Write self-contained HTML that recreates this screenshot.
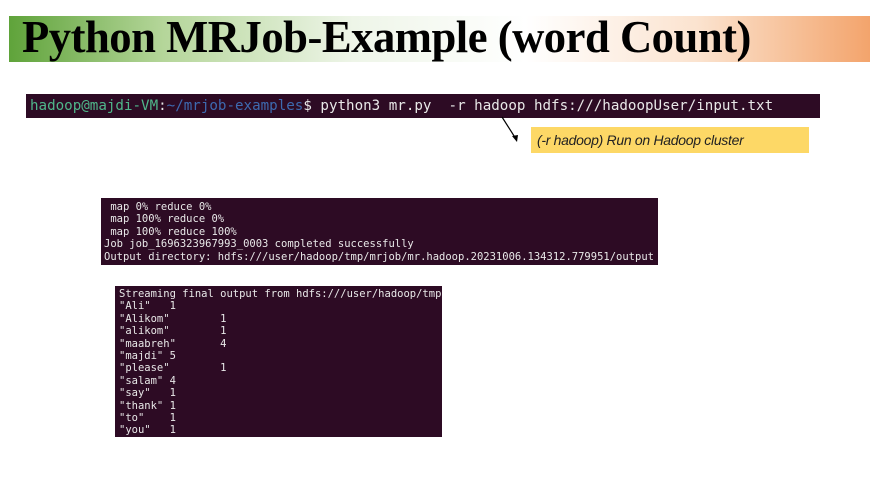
<!DOCTYPE html>
<html><head><style>
body{margin:0;width:880px;height:495px;background:#fff;position:relative;overflow:hidden;font-family:"Liberation Sans",sans-serif}
.band{position:absolute;left:9px;top:16px;width:861px;height:46px;background:linear-gradient(90deg,#5fa33a 0%,#b5d69a 18%,#eef5e8 40%,#fff 60%,#fbe3cf 80%,#f3a46c 100%)}
.title{position:absolute;left:22px;top:10px;font-family:"Liberation Serif",serif;font-weight:bold;font-size:46px;color:#000;white-space:nowrap;transform:scaleX(0.97);transform-origin:left;letter-spacing:-0.5px}
.term{position:absolute;background:#2d0b24;color:#e8e8e8;font-family:"DejaVu Sans Mono","Liberation Mono",monospace;white-space:pre;overflow:hidden}
.t1{left:26px;top:94px;width:794px;height:24px;font-size:14.2px;line-height:24px;padding-left:4px;box-sizing:border-box}
.t2{left:101px;top:198px;width:557px;height:67px;font-size:10.5px;line-height:12.4px;padding:3px 0 0 3px;box-sizing:border-box}
.t3{left:115px;top:286px;width:327px;height:151px;font-size:10.5px;line-height:12.4px;padding:2px 0 0 4px;box-sizing:border-box}
.g{color:#4fb68a}.b{color:#3d6ab0}
.call{position:absolute;left:531px;top:127px;width:278px;height:26px;background:#fdd866;font-style:italic;font-size:14px;line-height:26px;padding-left:6px;box-sizing:border-box;color:#222;letter-spacing:-0.3px}
</style></head><body>
<div class="band"></div>
<div class="title">Python MRJob-Example (word Count)</div>
<div class="term t1"><span class="g">hadoop@majdi-VM</span>:<span class="b">~/mrjob-examples</span>$ python3 mr.py  -r hadoop hdfs:///hadoopUser/input.txt</div>
<svg style="position:absolute;left:495px;top:112px" width="30" height="34"><line x1="7" y1="5" x2="21" y2="27" stroke="#000" stroke-width="1.2"/><polygon points="22,30 17,24 23,23" fill="#000"/></svg>
<div class="call">(-r hadoop) Run on Hadoop cluster</div>
<div class="term t2"> map 0% reduce 0%
 map 100% reduce 0%
 map 100% reduce 100%
Job job_1696323967993_0003 completed successfully
Output directory: hdfs:///user/hadoop/tmp/mrjob/mr.hadoop.20231006.134312.779951/output</div>
<div class="term t3">Streaming final output from hdfs:///user/hadoop/tmp/mrjob
"Ali"   1
"Alikom"        1
"alikom"        1
"maabreh"       4
"majdi" 5
"please"        1
"salam" 4
"say"   1
"thank" 1
"to"    1
"you"   1</div>
</body></html>
